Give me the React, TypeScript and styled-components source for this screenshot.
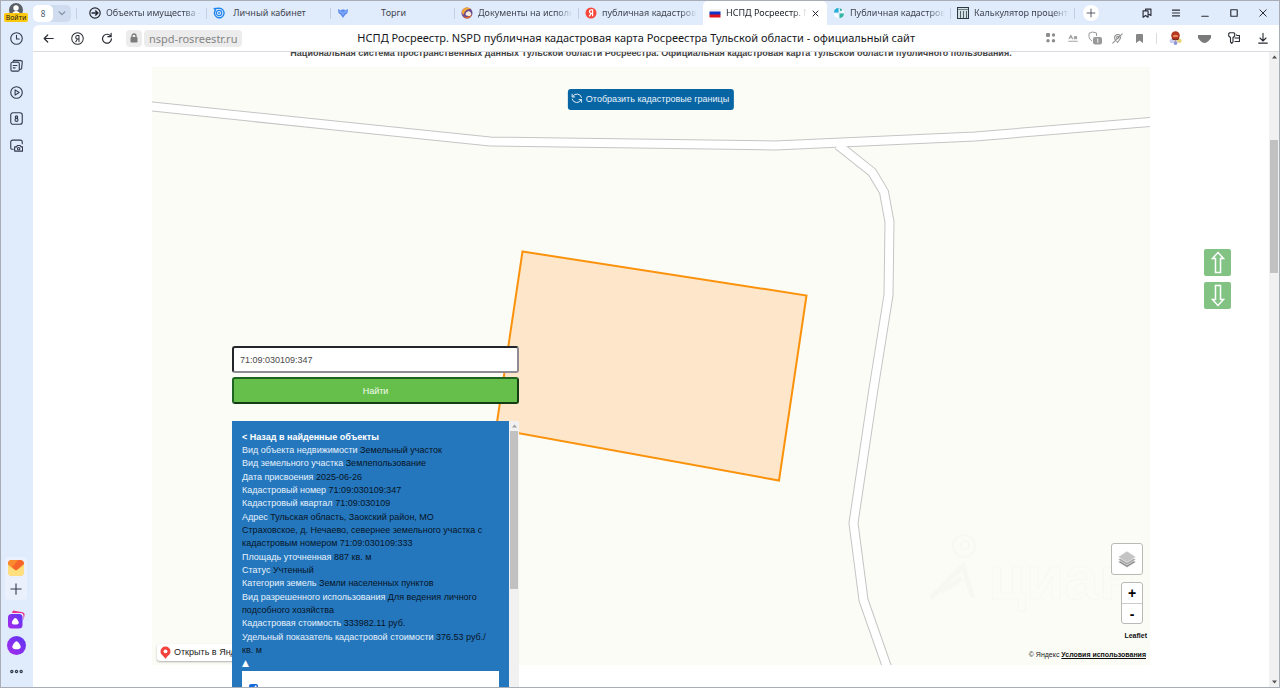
import React from "react";
import styled, { createGlobalStyle, css } from "styled-components";

const SANS = '"Liberation Sans", Arial, sans-serif';
const UI = '"Noto Sans", "Open Sans", sans-serif';

const GlobalStyle = createGlobalStyle`
  *, *::before, *::after { box-sizing: border-box; }
  html, body { margin: 0; padding: 0; overflow: hidden; }
  body { background: #fff; font-family: ${SANS}; }
  button, input { font: inherit; margin: 0; }
  button { background: none; border: 0; padding: 0; color: inherit; }
  svg { display: block; flex: none; }
`;

const Window = styled.div`
  display: flex;
  height: 100vh;
  background: #e0ebfc;
  border: 1px solid #a9adb6;
  overflow: hidden;
`;

/* ---------- Sidebar ---------- */
const Sidebar = styled.nav`
  flex: none;
  width: 32px;
  display: flex;
  flex-direction: column;
  align-items: center;
  padding: 0 2px 2px 0;
`;

const Profile = styled.button`
  height: 24px;
  display: flex;
  flex-direction: column;
  align-items: center;
  justify-content: flex-end;
  padding-bottom: 3px;
`;

const LoginTag = styled.span`
  width: 24px;
  height: 9px;
  margin-top: -2px;
  border-radius: 2px;
  background: #fdc90f;
  color: #1d1d1d;
  font: 7px/9px ${UI};
  text-align: center;
  z-index: 1;
`;

const SideButton = styled.button<{ $h?: number }>`
  width: 24px;
  height: ${(p) => p.$h ?? 27}px;
  display: flex;
  align-items: center;
  justify-content: center;
  color: #333b4d;
`;

const SideSpacer = styled.div`
  flex: 1;
`;

const SideGroup = styled.div`
  width: 22px;
  display: flex;
  flex-direction: column;
  align-items: center;
  border-radius: 4px;
  background: #eaf1fd;
  margin-bottom: 6px;
`;

/* ---------- Tab strip ---------- */
const Main = styled.div`
  flex: 1;
  min-width: 0;
  display: flex;
  flex-direction: column;
`;

const TabStrip = styled.header`
  flex: none;
  height: 24px;
  display: flex;
  align-items: center;
  font: 9px/14px ${UI};
  color: #3f4550;
`;

const TabCounter = styled.button`
  flex: none;
  display: flex;
  align-items: center;
  width: 38px;
  height: 17px;
  border-radius: 5px;
  background: #cfdcef;
  color: #7d8aa0;
`;

const CounterValue = styled.span`
  width: 20px;
  height: 17px;
  margin-right: 5px;
  border-radius: 5px;
  background: #fff;
  color: #4d596e;
  font: 8px/17px ${UI};
  text-align: center;
`;

const TabList = styled.div`
  flex: 0 1 992px;
  min-width: 0;
  height: 100%;
  display: grid;
  grid-template-columns: repeat(8, minmax(0, 1fr));
  margin-left: 12px;
`;

const Tab = styled.button<{ $active?: boolean; $rule?: boolean; $center?: boolean }>`
  position: relative;
  min-width: 0;
  display: flex;
  align-items: center;
  gap: 5px;
  padding: 0 6px;
  text-align: left;
  ${(p) =>
    p.$active &&
    css`
      padding-right: 8px;
      background: #fff;
      border-radius: 5px 5px 0 0;
      color: #22262e;
    `}
  ${(p) =>
    p.$center &&
    css`
      padding-right: 22px;
      text-align: center;
    `}
  ${(p) =>
    p.$rule &&
    css`
      &::after {
        content: "";
        position: absolute;
        right: 0;
        top: 7px;
        height: 11px;
        width: 1px;
        background: #c3cfe2;
      }
    `}
`;

const TabTitle = styled.span<{ $fade?: boolean }>`
  flex: 1;
  min-width: 0;
  overflow: hidden;
  white-space: nowrap;
  ${(p) =>
    p.$fade &&
    css`
      mask-image: linear-gradient(to right, #000 82%, transparent);
    `}
`;

const FirstRule = styled.span`
  flex: none;
  width: 1px;
  height: 11px;
  margin-left: 5px;
  margin-right: -6px;
  background: #c3cfe2;
`;

const NewTab = styled.button`
  flex: none;
  width: 16px;
  height: 16px;
  margin-left: 8px;
  border-radius: 8px;
  background: #fff;
  display: flex;
  align-items: center;
  justify-content: center;
`;

const Cells = styled.div`
  flex: none;
  margin-left: auto;
  padding-right: 2px;
  display: flex;
  align-items: center;
`;

const Cell = styled.button<{ $w?: number; $tone?: string }>`
  width: ${(p) => p.$w ?? 29}px;
  height: 24px;
  display: flex;
  align-items: center;
  justify-content: center;
  color: ${(p) => p.$tone ?? "#2a2d35"};
`;

/* ---------- Address bar ---------- */
const AddressBar = styled.div`
  flex: none;
  height: 27px;
  display: flex;
  align-items: center;
  padding-left: 1px;
  background: #fff;
  border-bottom: 1px solid #d9dbe0;
  border-top-left-radius: 6px;
`;

const SiteLock = styled.button`
  width: 16px;
  height: 17px;
  margin-left: 5px;
  border-radius: 4px;
  background: #ececec;
  color: #7c7c7c;
  display: flex;
  align-items: center;
  justify-content: center;
`;

const Domain = styled.button`
  height: 17px;
  margin-left: 2px;
  padding: 0 5px;
  border-radius: 4px;
  background: #ececec;
  color: #858585;
  font: 11px/17px ${UI};
`;

const PageTitle = styled.div`
  flex: 1;
  min-width: 0;
  padding-right: 10px;
  overflow: hidden;
  white-space: nowrap;
  text-align: center;
  color: #16181c;
  font: 11px/18px ${UI};
`;

const BarRule = styled.span`
  width: 1px;
  height: 11px;
  margin: 0 4px 0 6px;
  background: #dcdcdc;
`;

/* ---------- Page ---------- */
const Viewport = styled.div`
  position: relative;
  flex: 1;
  min-height: 0;
  display: flex;
  background: #fff;
  overflow: hidden;
`;

const Page = styled.main`
  flex: 1;
  min-width: 0;
  padding: 0 119px;
`;

const Heading = styled.h2`
  margin: -5px 0 7px;
  color: #444;
  font: bold 9px/13px ${SANS};
  text-align: center;
  white-space: nowrap;
`;

const MapArea = styled.section`
  position: relative;
  height: 598px;
  background: #fbfcf6;
`;

const MapCanvas = styled.svg`
  width: 100%;
  height: 100%;
`;

const BordersButton = styled.button`
  position: absolute;
  top: 22px;
  left: 50%;
  transform: translateX(-50%);
  height: 21px;
  padding: 0 5px 0 3px;
  display: flex;
  align-items: center;
  gap: 3px;
  border-radius: 3px;
  background: #0765a3;
  color: #e9f4fb;
  font: 9px/21px ${SANS};
  white-space: nowrap;
`;

const SearchPanel = styled.form`
  position: absolute;
  left: 80px;
  top: 279px;
  width: 287px;
  display: flex;
  flex-direction: column;
`;

const SearchInput = styled.input`
  height: 27px;
  padding: 0 6px;
  border: 2px solid;
  border-color: #23262b #8f8c95 #8f8c95 #23262b;
  border-radius: 3px;
  background: #fff;
  color: #4a4a4a;
  font: 9px/20px ${SANS};
  outline: 0;
`;

const SearchButton = styled.button`
  height: 27px;
  margin: 4px 0 17px;
  border: 2px solid;
  border-color: #1f6322 #123d14 #123d14 #1f6322;
  border-radius: 3px;
  background: #67bf4b;
  color: #f3fbef;
  font: 9px/20px ${SANS};
`;

const Results = styled.div`
  display: flex;
  height: 300px;
`;

const ResultBody = styled.div`
  flex: 1;
  padding: 10px;
  display: flex;
  flex-direction: column;
  gap: 1px;
  background: #2577bd;
  color: #061427;
  font: 9px/13px ${SANS};
`;

const BackLink = styled.a`
  display: block;
  color: #fff;
  font-weight: bold;
  text-decoration: none;
`;

const RecordGroup = styled.div`
  padding-right: 7px;
`;

const RecordRow = styled.div`
  span {
    color: #e6f2fc;
  }
`;

const Collapse = styled.button`
  display: block;
  color: #fff;
  font: 9px/13px "DejaVu Sans", sans-serif;
`;

const OptionBox = styled.div`
  flex: 1;
  padding: 13px 7px;
  background: #fff;
  input {
    display: block;
    width: 9px;
    height: 9px;
    accent-color: #1769dd;
  }
`;

const ScrollTrack = styled.div<{ $w: number; $tone?: string }>`
  flex: none;
  width: ${(p) => p.$w}px;
  display: flex;
  flex-direction: column;
  align-items: center;
  background: #f1f1f1;
  color: ${(p) => p.$tone ?? "#505050"};
`;

const ScrollArrow = styled.span`
  height: 10px;
  display: flex;
  align-items: center;
`;

const Thumb = styled.span<{ $top: number; $h: number }>`
  width: 8px;
  height: ${(p) => p.$h}px;
  margin-top: ${(p) => p.$top}px;
  margin-bottom: auto;
  background: #c1c1c1;
`;

const MapControls = styled.div`
  position: absolute;
  right: 3px;
  bottom: 5px;
  display: flex;
  flex-direction: column;
  align-items: flex-end;
  color: #222;
  font: 7px/10px ${SANS};
`;

const ControlBox = styled.div`
  margin: 0 4px 7px 0;
  display: flex;
  flex-direction: column;
  border: 1px solid #b9bab6;
  border-radius: 3px;
  background: #fff;
`;

const LayersButton = styled.button`
  width: 30px;
  height: 30px;
  display: flex;
  align-items: center;
  justify-content: center;
`;

const ZoomButton = styled.button`
  width: 20px;
  height: 20px;
  color: #000;
  font: bold 14px/18px ${SANS};
  & + & {
    border-top: 1px solid #ccc;
  }
`;

const Credit = styled.div`
  height: 10px;
  margin-bottom: 9px;
  white-space: nowrap;
  a {
    color: #111;
    font-weight: bold;
  }
  &:last-child {
    margin: 0 1px 0 0;
  }
`;

const LeafletLink = styled.a`
  text-decoration: none;
`;

const OpenInYandex = styled.a`
  position: absolute;
  left: 5px;
  bottom: 4px;
  height: 17px;
  padding: 0 5px 0 3px;
  display: flex;
  align-items: center;
  gap: 3px;
  border-radius: 3px;
  background: #fff;
  box-shadow: 0 1px 2px rgba(0, 0, 0, 0.3);
  color: #222;
  font: 9px/17px ${SANS};
  text-decoration: none;
  white-space: nowrap;
`;

const JumpButtons = styled.div`
  position: absolute;
  right: 48px;
  top: 197px;
  display: flex;
  flex-direction: column;
  gap: 6px;
`;

const JumpButton = styled.button`
  width: 27px;
  height: 27px;
  display: flex;
  align-items: center;
  justify-content: center;
  border-radius: 2px;
  background: #82c384;
  color: #fff;
`;

/* ---------- Icons ---------- */
const Icon = ({ size = 14, children, w = 1.2 }: { size?: number; w?: number; children: React.ReactNode }) => (
  <svg width={size} height={size} viewBox="0 0 14 14" fill="none" stroke="currentColor" strokeWidth={w} strokeLinecap="round" strokeLinejoin="round" aria-hidden="true">
    {children}
  </svg>
);

const AvatarIcon = () => (
  <svg width="14" height="12" viewBox="0 0 14 12">
    <circle cx="7" cy="7" r="7" fill="#5a5e66" />
    <circle cx="7" cy="5" r="2.7" fill="#fff" />
    <path d="M3 12c0-3 2-4 4-4s4 1 4 4z" fill="#fff" />
  </svg>
);

const AliceDrop = <path d="M7 3.6c1.5 0 3.5 3.6 3.5 4.8S9 10.300 7 10.300 3.500 9.600 3.500 8.400 5.500 3.600 7 3.600z" fill="#fff" />;

const MailIcon = () => (
  <svg width="16" height="16" viewBox="0 0 16 16">
    <rect width="16" height="16" rx="4" fill="#fbd467" />
    <path d="M0 6l8 5 8-5v6a4 4 0 0 1-4 4H4a4 4 0 0 1-4-4z" fill="#ffdf80" />
    <path d="M0 4a4 4 0 0 1 4-4h8a4 4 0 0 1 4 4L9.200 9.800a2 2 0 0 1-2.400 0z" fill="#f6632b" />
    <path d="M0 4a4 4 0 0 1 4-4h6L4 7.400z" fill="#fb8a2e" />
  </svg>
);

const Purple = () => (
  <defs>
    <linearGradient id="alice" x1="1" y1="0" x2="0" y2="1">
      <stop offset="0" stopColor="#5a35f5" />
      <stop offset="1" stopColor="#a92bea" />
    </linearGradient>
  </defs>
);

const favicons: Record<string, React.ReactNode> = {
  arrow: (
    <g fill="none" stroke="#23262c" strokeWidth="1.2">
      <circle cx="6" cy="6" r="5.200" />
      <path d="M2.500 6h6M6.300 3.500L8.800 6 6.300 8.500" strokeWidth="1.500" />
    </g>
  ),
  cabinet: (
    <g fill="none" stroke="#2286ef">
      <path d="M1.500 1.500l1 1.500A4.800 4.800 0 1 0 6 1.200z" strokeWidth="1.400" />
      <circle cx="6" cy="6" r="2.700" strokeWidth="1.200" />
      <circle cx="6" cy="6" r="0.900" fill="#2286ef" stroke="none" />
    </g>
  ),
  eagle: (
    <g fill="#5b8cf0">
      <path d="M1 2l3 1.500L5 2l1 1 1-1 1 1.500L11 2l-.5 4-2 1.500L7 9.500 6 11 5 9.500 3.500 7.500l-2-1.500z" />
      <path d="M2.500 4.500l2.500 1M9.500 4.500L7 5.500M6 5v3" stroke="#dfe9fc" strokeWidth=".5" />
    </g>
  ),
  globe: (
    <g>
      <circle cx="6" cy="6" r="5.500" fill="#6b4a8e" />
      <path d="M1 4a5.500 5.500 0 0 1 9-2C6 1.500 3.500 4 2.500 8 1 7 .6 5.500 1 4z" fill="#f3a637" />
      <path d="M4.500 7c1-3.500 4.500-3.500 5.500-1s-1 3.500-2.500 3S4.500 8.500 4.500 7z" fill="#f7ead9" />
      <path d="M2 9c3 2 7 1 9-2-.5 3-3 4.500-5 4.500S3 10.500 2 9z" fill="#e06a2b" />
    </g>
  ),
  yandex: (
    <g>
      <circle cx="6" cy="6" r="5.500" fill="#f5473c" />
      <path d="M7.600 9.300V2.800H6.300a1.800 1.800 0 0 0 0 3.600h1.300M6.200 6.400L4.300 9.300" fill="none" stroke="#fff" strokeWidth="1.200" />
    </g>
  ),
  flag: (
    <g>
      <path d="M.5 2h11v3H.5z" fill="#f1f1f1" />
      <path d="M.5 4.500h11V8H.5z" fill="#1232c8" />
      <path d="M.5 7.500h11V10.500H.5z" fill="#e0141d" />
    </g>
  ),
  petals: (
    <g>
      <path d="M5.500 1v4.500H1A4.500 4.500 0 0 1 5.500 1z" fill="#1fb0d5" />
      <path d="M6.500 1A4.800 4.800 0 0 1 11 5.500H8.800A2.500 2.500 0 0 1 6.500 3.200z" fill="#fff" />
      <path d="M6.500 11V6.500H11A4.500 4.500 0 0 1 6.500 11z" fill="#31b7a1" />
      <path d="M5.500 11A4.800 4.800 0 0 1 1 6.500h2.200A2.500 2.500 0 0 1 5.500 8.800z" fill="#fff" />
      <path d="M6.500 1.200A4.500 4.500 0 0 1 9.500 3L7.500 4.500z" fill="#2aa9a0" />
    </g>
  ),
  calc: (
    <g>
      <rect x=".5" y=".5" width="11" height="11" fill="#d3dfe0" stroke="#2b3940" />
      <path d="M1 2.500h10" stroke="#6d8288" />
      <path d="M3.500 4v7M6.500 4v7M9.500 4v7" stroke="#4c646c" />
    </g>
  ),
};

const tabs = [
  { icon: "arrow", title: "Объекты имущества - торги", fade: true, rule: true },
  { icon: "cabinet", title: "Личный кабинет", center: true, rule: true },
  { icon: "eagle", title: "Торги", center: true, rule: true },
  { icon: "globe", title: "Документы на исполнение", fade: true, rule: true },
  { icon: "yandex", title: "публичная кадастровая", fade: true },
  { icon: "flag", title: "НСПД Росреестр. NSPD", fade: true, active: true },
  { icon: "petals", title: "Публичная кадастровая", fade: true, rule: true },
  { icon: "calc", title: "Калькулятор процентов", fade: true, rule: true },
];

type Rec = { label: string; value: React.ReactNode };

const recordGroups: Rec[][] = [
  [
    { label: "Вид объекта недвижимости", value: "Земельный участок" },
    { label: "Вид земельного участка", value: "Землепользование" },
  ],
  [
    { label: "Дата присвоения", value: "2025-06-26" },
    { label: "Кадастровый номер", value: "71:09:030109:347" },
    { label: "Кадастровый квартал", value: "71:09:030109" },
  ],
  [
    {
      label: "Адрес",
      value:
        "Тульская область, Заокский район, МО Страховское, д. Нечаево, севернее земельного участка с кадастровым номером 71:09:030109:333",
    },
  ],
  [
    { label: "Площадь уточненная", value: "887 кв. м" },
    { label: "Статус", value: "Учтенный" },
    { label: "Категория земель", value: "Земли населенных пунктов" },
  ],
  [
    { label: "Вид разрешенного использования", value: "Для ведения личного подсобного хозяйства" },
    { label: "Кадастровая стоимость", value: "333982.11 руб." },
  ],
  [
    {
      label: "Удельный показатель кадастровой стоимости",
      value: (
        <>
          376.53 руб./
          <wbr />
          кв. м
        </>
      ),
    },
  ],
];

const mainRoad = "M-10 38.500L0 39.500L178 58L338 74.500L623 78.500L823 69.500L998 55L1010 54";
const sideRoad = "M686 78L720 105L732 125L737.500 155L736.500 228L721 325L701.500 456L711.500 533L736 603";

const Arrow = ({ down }: { down?: boolean }) => (
  <svg width="7" height="10" viewBox="0 0 7 10" aria-hidden="true">
    <path d={down ? "M1 3.500h5L3.500 6.500z" : "M1 6.500h5L3.500 3.500z"} fill="currentColor" />
  </svg>
);

const BrowserTabs = () => (
  <TabStrip>
    <TabCounter aria-label="Группа вкладок">
      <CounterValue>8</CounterValue>
      <Icon size={8} w={2}>
        <path d="M2 5l5 5 5-5" />
      </Icon>
    </TabCounter>
    <FirstRule />
    <TabList>
      {tabs.map((t) => (
        <Tab key={t.icon} $active={t.active} $rule={t.rule} $center={t.center}>
          <svg width="12" height="12" viewBox="0 0 12 12" aria-hidden="true">
            {favicons[t.icon]}
          </svg>
          <TabTitle $fade={t.fade}>{t.title}</TabTitle>
          {t.active && (
            <Icon size={7} w={2}>
              <path d="M2 2l10 10M12 2L2 12" />
            </Icon>
          )}
        </Tab>
      ))}
    </TabList>
    <NewTab aria-label="Новая вкладка">
      <Icon size={10} w={1.2}>
        <path d="M7 1.500v11M1.500 7h11" />
      </Icon>
    </NewTab>
    <Cells>
      <Cell aria-label="Закладки">
        <Icon size={10} w={1.6}>
          <path d="M5 3V1.500h7.500v9L10 9M1.500 4h7v9L5 10.500 1.500 13z" />
        </Icon>
      </Cell>
      <Cell aria-label="Меню">
        <Icon size={10} w={1.5}>
          <path d="M2 3h10M2 7h10M2 11h10" />
        </Icon>
      </Cell>
      <Cell aria-label="Свернуть">
        <Icon size={10} w={1.6}>
          <path d="M2.500 11.500h9" />
        </Icon>
      </Cell>
      <Cell aria-label="Развернуть">
        <Icon size={10} w={1.6}>
          <path d="M2.500 2.500h9v9h-9z" />
        </Icon>
      </Cell>
      <Cell aria-label="Закрыть">
        <Icon size={10} w={1.4}>
          <path d="M2.500 2.500l9 9M11.500 2.500l-9 9" />
        </Icon>
      </Cell>
    </Cells>
  </TabStrip>
);

const Toolbar = () => (
  <AddressBar>
    <Cell aria-label="Назад">
      <Icon size={11} w={1.5}>
        <path d="M13 7H1.500M6 2.500L1.500 7 6 11.500" />
      </Icon>
    </Cell>
    <Cell aria-label="Яндекс">
      <Icon size={13} w={1.1}>
        <circle cx="7" cy="7" r="6.200" />
        <path d="M8.600 10.500V3.700H7a1.900 1.900 0 0 0 0 3.800h1.600M7 7.500l-1.900 3" />
      </Icon>
    </Cell>
    <Cell aria-label="Обновить">
      <Icon size={12} w={1.4}>
        <path d="M11.500 5.200A5.200 5.200 0 1 0 12.200 8M11.800 1.500v3.900H8" />
      </Icon>
    </Cell>
    <SiteLock aria-label="О сайте">
      <svg width="8" height="10" viewBox="0 0 8 10">
        <path d="M2 4.500V3a2 2 0 0 1 4 0v1.500" fill="none" stroke="currentColor" strokeWidth="1.300" />
        <rect x=".5" y="4" width="7" height="5.500" rx="1" fill="currentColor" />
      </svg>
    </SiteLock>
    <Domain>nspd-rosreestr.ru</Domain>
    <PageTitle>НСПД Росреестр. NSPD публичная кадастровая карта Росреестра Тульской области - официальный сайт</PageTitle>
    <Cells>
      <Cell $w={22} $tone="#8d8d8d" aria-label="Расширения">
        <svg width="10" height="10" viewBox="0 0 10 10" fill="currentColor">
          <rect x="0" y="0" width="4" height="4" rx="1" />
          <circle cx="7.500" cy="2" r="1.700" />
          <circle cx="2" cy="7.800" r="1.700" />
          <circle cx="7.500" cy="7.800" r="1.700" />
        </svg>
      </Cell>
      <Cell $w={22} $tone="#a5a5a5" aria-label="Перевести">
        <Icon size={10} w={1.6}>
          <path d="M1.500 8L4 3l2.500 5M2.500 6.500h3M9 5h3v3H9V6.500h3M1 11.500h12" />
        </Icon>
      </Cell>
      <Cell $w={22} $tone="#999" aria-label="Защита">
        <svg width="14" height="14" viewBox="0 0 14 14">
          <path d="M4.500 1L8.500 2v3M4.500 1L1 2.300v3c0 2 1 3.500 3 4.500" fill="none" stroke="currentColor" strokeWidth="1" />
          <rect x="5" y="6" width="9" height="7.500" rx="2" fill="currentColor" />
          <path d="M9 8.300l.8-.5v4" fill="none" stroke="#fff" strokeWidth=".9" />
        </svg>
      </Cell>
      <Cell $w={22} $tone="#8d8d8d" aria-label="Геолокация">
        <Icon size={11} w={1.3}>
          <path d="M1 13L13 1M4 8.500C3 6.500 3 4.500 4.500 3S9 1.500 10 3M11 5c0 3-2 4.500-4 7l-1-1.500" />
          <circle cx="7.300" cy="5.500" r="1.500" />
        </Icon>
      </Cell>
      <Cell $w={22} $tone="#868686" aria-label="В закладки">
        <svg width="7" height="9" viewBox="0 0 7 9">
          <path d="M0 1a1 1 0 0 1 1-1h5a1 1 0 0 1 1 1v8L3.500 6.500 0 9z" fill="currentColor" />
        </svg>
      </Cell>
      <BarRule />
      <Cell aria-label="Персонаж">
        <svg width="13" height="14" viewBox="0 0 13 14">
          <circle cx="2.800" cy="10" r="2.300" fill="#c9cdf0" />
          <circle cx="10.300" cy="9.800" r="2.300" fill="#e8d27a" />
          <circle cx="6.500" cy="12" r="1.900" fill="#8d94d8" />
          <circle cx="6.500" cy="4.500" r="4.300" fill="#b5361f" />
          <path d="M4 4.500c1-1 4-1 5 0v1.500H4z" fill="#e8865c" />
          <path d="M3 7.500c2 1.500 5 1.500 7 0" stroke="#6e1d12" strokeWidth="1.200" fill="none" />
        </svg>
      </Cell>
      <Cell $tone="#7a7a7a" aria-label="Карман">
        <svg width="13" height="9" viewBox="0 0 13 9">
          <path d="M0 1h13v3L10.500 7C9 8.200 8 9 6.500 9S4 8.200 2.500 7L0 4z" fill="currentColor" />
        </svg>
      </Cell>
      <Cell aria-label="Пароли">
        <svg width="12" height="12" viewBox="0 0 12 12" fill="none" stroke="currentColor" strokeWidth="1.100" strokeLinejoin="round">
          <path d="M2.500 5.500L.7 4V1.500L1.700.7h4L6.700 1.500V4L5 5.500v4.500l-1.200 1.300L2.500 10z" />
          <path d="M6.500 9.500h5V3.500H9L8.300 2.500" />
          <path d="M6.500 6h5" />
        </svg>
      </Cell>
      <Cell aria-label="Загрузки">
        <Icon size={12} w={1.300}>
          <path d="M7 1.500v8.500M3.500 7L7 10.500 10.500 7M2 13h10" />
        </Icon>
      </Cell>
    </Cells>
  </AddressBar>
);

const SideNav = () => (
  <Sidebar aria-label="Боковая панель">
    <Profile>
      <AvatarIcon />
      <LoginTag>Войти</LoginTag>
    </Profile>
    <SideButton aria-label="История">
      <Icon size={13}>
        <circle cx="7" cy="7" r="6.200" />
        <path d="M7 3.500V7.500h3" />
      </Icon>
    </SideButton>
    <SideButton aria-label="Коллекции">
      <Icon size={13}>
        <path d="M1 5a1.500 1.500 0 0 1 1.500-1.500H8.500A1.500 1.500 0 0 1 10 5v6.500A1.500 1.500 0 0 1 8.500 13h-6A1.500 1.500 0 0 1 1 11.500zM3 3.300L4 1.500l8 .3a1.200 1.200 0 0 1 1.200 1.200l-.7 7.500-2 .8M3.500 7h4M3.500 9.500h2" />
      </Icon>
    </SideButton>
    <SideButton $h={26} aria-label="Видео">
      <Icon size={13}>
        <circle cx="7" cy="7" r="6.200" />
        <path d="M5.500 4.200v5.600L9.800 7z" />
      </Icon>
    </SideButton>
    <SideButton aria-label="Вкладки">
      <Icon size={13}>
        <rect x=".8" y=".8" width="12.400" height="12.400" rx="2.500" />
        <circle cx="7" cy="5.500" r="1.300" />
        <circle cx="7" cy="8.500" r="1.600" />
      </Icon>
    </SideButton>
    <SideButton aria-label="Снимок экрана">
      <Icon size={13}>
        <path d="M3.500 11H2A1.200 1.200 0 0 1 .8 9.800V3.200A2 2 0 0 1 2.800 1.200h8.400a2 2 0 0 1 2 2V5" />
        <path d="M5 8.500h2L8 7h3l1 1.500h1.500V13H5z" />
        <circle cx="9.300" cy="10.500" r="1.300" />
      </Icon>
    </SideButton>
    <SideSpacer />
    <SideGroup>
      <SideButton $h={21} aria-label="Почта">
        <MailIcon />
      </SideButton>
      <SideButton $h={22} aria-label="Добавить">
        <Icon size={12} w={1.300}>
          <path d="M7 1v12M1 7h12" />
        </Icon>
      </SideButton>
    </SideGroup>
    <SideButton aria-label="Алиса: изображения">
      <svg width="18" height="19" viewBox="0 0 18 19">
        <Purple />
        <path d="M6 .5l9.500 1.800a2.500 2.500 0 0 1 2 3L16.500 10.500V6A3 3 0 0 0 13.500 3H5z" fill="#ee2b8d" />
        <rect x="1" y="4" width="14.500" height="14.500" rx="3.500" fill="url(#alice)" />
        <g transform="translate(1.300 4.300)">{AliceDrop}</g>
      </svg>
    </SideButton>
    <SideButton $h={25} aria-label="Алиса">
      <svg width="19" height="19" viewBox="0 0 19 19">
        <circle cx="9.500" cy="9.500" r="9.500" fill="url(#alice)" />
        <g transform="translate(1.100 1) scale(1.200)">{AliceDrop}</g>
      </svg>
    </SideButton>
    <SideButton aria-label="Ещё">
      <Icon size={13} w={1.300}>
        <circle cx="2" cy="7" r="1.200" />
        <circle cx="7" cy="7" r="1.200" />
        <circle cx="12" cy="7" r="1.200" />
      </Icon>
    </SideButton>
  </Sidebar>
);

export default function App() {
  return (
    <>
      <GlobalStyle />
      <Window>
        <SideNav />
        <Main>
          <BrowserTabs />
          <Toolbar />
          <Viewport>
            <Page>
              <Heading>
                Национальная система пространственных данных Тульской области Росреестра. Официальная кадастровая карта Тульской области публичного пользования.
              </Heading>
              <MapArea aria-label="Кадастровая карта">
                <MapCanvas viewBox="0 0 998 598" preserveAspectRatio="xMidYMid slice" aria-hidden="true">
                  <g fill="none" stroke="#c4c5c4" strokeWidth="10">
                    <path d={mainRoad} />
                    <path d={sideRoad} />
                  </g>
                  <g fill="none" stroke="#fff" strokeWidth="8">
                    <path d={mainRoad} />
                    <path d={sideRoad} />
                  </g>
                  <path d="M370.500 184.500L654.500 228.500L627 413.500L344 362z" fill="#fee6ca" stroke="#fb920c" strokeWidth="2" />
                  <g fill="none" stroke="#f7f8f2" strokeWidth="2">
                    <circle cx="812" cy="479" r="11" />
                    <circle cx="813" cy="478" r="4" />
                    <path d="M779 531l32-32 10 32M790 525l20-14" strokeWidth="5" />
                    <g fill="none" fontFamily="Liberation Sans, Arial, sans-serif" fontWeight="bold" fontSize="62" strokeWidth="1">
                      <text x="836" y="532">циан</text>
                    </g>
                  </g>
                </MapCanvas>
                <BordersButton>
                  <svg width="12" height="16" viewBox="0 0 14 18" fill="none" stroke="currentColor" strokeWidth="1.100">
                    <path d="M2 5.500a5.500 5.500 0 0 1 10.500 1M12 8.500A5.500 5.500 0 0 1 1.500 7.500M1.500 1.800V5.500h3.500M12.500 12V8.500H9" />
                  </svg>
                  Отобразить кадастровые границы
                </BordersButton>
                <OpenInYandex href="#yandex">
                  <svg width="11" height="13" viewBox="0 0 11 13">
                    <path d="M5.500.5a5 5 0 0 1 5 5c0 3.500-3.500 4-4.500 7h-1c-1-3-4.500-3.500-4.500-7a5 5 0 0 1 5-5z" fill="#f4433c" />
                    <circle cx="5.500" cy="5.300" r="1.900" fill="#fff" />
                  </svg>
                  Открыть в Яндекс Картах
                </OpenInYandex>
                <MapControls>
                  <ControlBox>
                    <LayersButton aria-label="Слои">
                      <svg width="20" height="20" viewBox="0 0 20 20" stroke="#fff" strokeWidth=".6">
                        <path d="M1 13l9-5 9 5-9 5.500z" fill="#8c8c8c" />
                        <path d="M1 10.500l9-5 9 5-9 5.500z" fill="#a3a3a3" />
                        <path d="M1 8l9-6 9 6-9 5.500z" fill="#c4c4c4" />
                      </svg>
                    </LayersButton>
                  </ControlBox>
                  <ControlBox>
                    <ZoomButton aria-label="Приблизить">+</ZoomButton>
                    <ZoomButton aria-label="Отдалить">-</ZoomButton>
                  </ControlBox>
                  <Credit>
                    <LeafletLink href="#leaflet">Leaflet</LeafletLink>
                  </Credit>
                  <Credit>
                    © Яндекс <a href="#terms">Условия использования</a>
                  </Credit>
                </MapControls>
                <SearchPanel onSubmit={(e) => e.preventDefault()}>
                  <SearchInput aria-label="Кадастровый номер" defaultValue="71:09:030109:347" />
                  <SearchButton type="submit">Найти</SearchButton>
                  <Results>
                    <ResultBody>
                      {recordGroups.map((group, i) => (
                        <RecordGroup key={group[0].label}>
                          {i === 0 && <BackLink href="#results">&lt; Назад в найденные объекты</BackLink>}
                          {group.map((r) => (
                            <RecordRow key={r.label}>
                              <span>{r.label}</span> {r.value}
                            </RecordRow>
                          ))}
                          {i === recordGroups.length - 1 && <Collapse type="button">▲</Collapse>}
                        </RecordGroup>
                      ))}
                      <OptionBox>
                        <input type="checkbox" defaultChecked aria-label="Показать на карте" />
                      </OptionBox>
                    </ResultBody>
                    <ScrollTrack $w={10} $tone="#a0a0a0">
                      <ScrollArrow>
                        <Arrow />
                      </ScrollArrow>
                      <Thumb $top={0} $h={158} />
                    </ScrollTrack>
                  </Results>
                </SearchPanel>
              </MapArea>
            </Page>
            <ScrollTrack $w={10}>
              <ScrollArrow>
                <Arrow />
              </ScrollArrow>
              <Thumb $top={78} $h={133} />
              <ScrollArrow>
                <Arrow down />
              </ScrollArrow>
            </ScrollTrack>
            <JumpButtons>
              <JumpButton aria-label="Вверх">
                <svg width="14" height="23" viewBox="0 0 14 23" fill="none" stroke="currentColor" strokeWidth="1.500">
                  <path d="M7 1.500L12.500 7.500H9.500V21.500H4.500V7.500H1.500z" />
                </svg>
              </JumpButton>
              <JumpButton aria-label="Вниз">
                <svg width="14" height="23" viewBox="0 0 14 23" fill="none" stroke="currentColor" strokeWidth="1.500">
                  <path d="M7 21.500L1.500 15.500H4.500V1.500H9.500V15.500H12.500z" />
                </svg>
              </JumpButton>
            </JumpButtons>
          </Viewport>
        </Main>
      </Window>
    </>
  );
}
